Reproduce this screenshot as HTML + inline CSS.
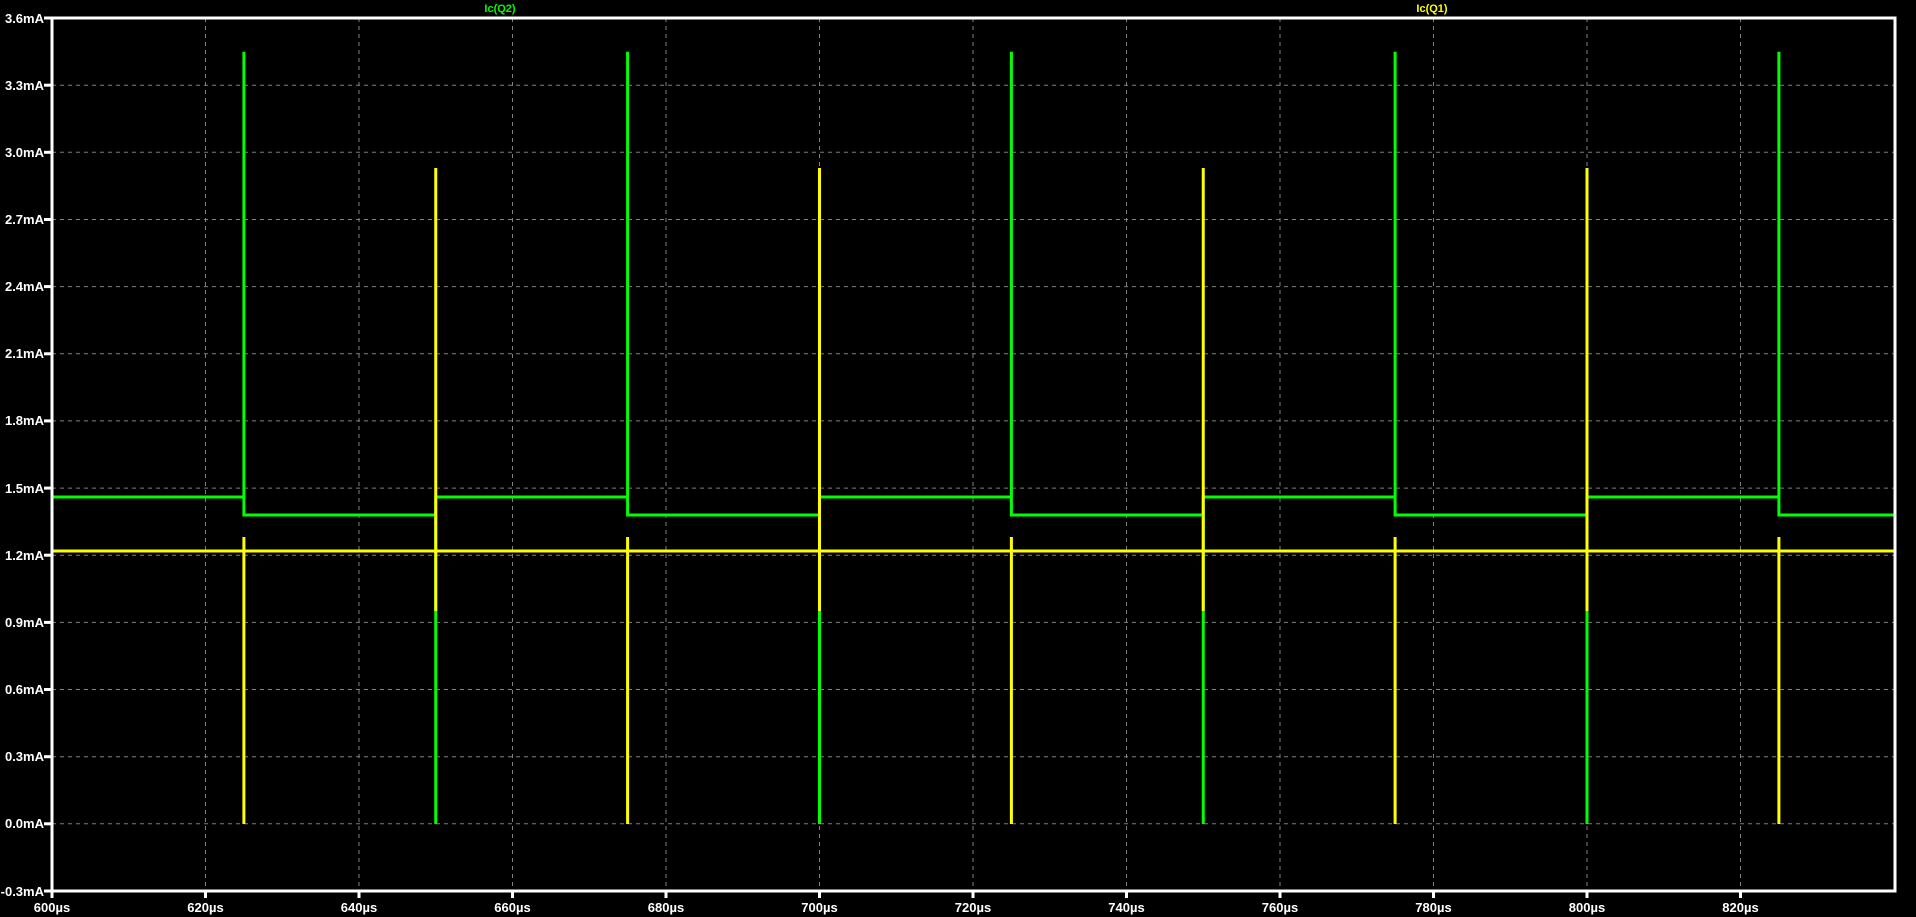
<!DOCTYPE html>
<html><head><meta charset="utf-8"><style>
html,body{margin:0;padding:0;background:#000;width:1916px;height:917px;overflow:hidden}
svg{display:block}
text{font-family:"Liberation Sans",sans-serif;font-weight:bold}
</style></head><body>
<svg width="1916" height="917" viewBox="0 0 1916 917">
<rect width="1916" height="917" fill="#000"/>
<g stroke="#808080" stroke-width="1" stroke-dasharray="4,4">
<line x1="52" x2="1895" y1="85.2" y2="85.2"/><line x1="52" x2="1895" y1="152.3" y2="152.3"/>
<line x1="52" x2="1895" y1="219.5" y2="219.5"/><line x1="52" x2="1895" y1="286.6" y2="286.6"/>
<line x1="52" x2="1895" y1="353.8" y2="353.8"/><line x1="52" x2="1895" y1="420.9" y2="420.9"/>
<line x1="52" x2="1895" y1="488.1" y2="488.1"/><line x1="52" x2="1895" y1="555.2" y2="555.2"/>
<line x1="52" x2="1895" y1="622.4" y2="622.4"/><line x1="52" x2="1895" y1="689.5" y2="689.5"/>
<line x1="52" x2="1895" y1="756.7" y2="756.7"/><line x1="52" x2="1895" y1="823.8" y2="823.8"/>
<line y1="18" y2="891" x1="205.5" x2="205.5"/><line y1="18" y2="891" x1="359" x2="359"/>
<line y1="18" y2="891" x1="512.5" x2="512.5"/><line y1="18" y2="891" x1="666" x2="666"/>
<line y1="18" y2="891" x1="819.5" x2="819.5"/><line y1="18" y2="891" x1="973" x2="973"/>
<line y1="18" y2="891" x1="1126.5" x2="1126.5"/><line y1="18" y2="891" x1="1280" x2="1280"/>
<line y1="18" y2="891" x1="1433.5" x2="1433.5"/><line y1="18" y2="891" x1="1587" x2="1587"/>
<line y1="18" y2="891" x1="1740.5" x2="1740.5"/>
</g>
<path fill="none" stroke="#00ff00" stroke-width="3" d="M52,824 V497 H243.9 V51.8 V515 H435.75 V824 V497 H627.6 V51.8 V515 H819.5 V824 V497 H1011.4 V51.8 V515 H1203.25 V824 V497 H1395.1 V51.8 V515 H1587 V824 V497 H1778.9 V51.8 V515 H1895"/>
<path fill="none" stroke="#ffff00" stroke-width="3" d="M52,168 V611 V551 H243.9 V824 V537 V551 H435.75 V168 V611 V551 H627.6 V824 V537 V551 H819.5 V168 V611 V551 H1011.4 V824 V537 V551 H1203.25 V168 V611 V551 H1395.1 V824 V537 V551 H1587 V168 V611 V551 H1778.9 V824 V537 V551 H1895"/>
<rect x="52" y="18" width="1843" height="873" fill="none" stroke="#fff" stroke-width="3"/>
<g stroke="#fff" stroke-width="3">
<line x1="44" x2="52" y1="18" y2="18"/><line x1="44" x2="52" y1="85.2" y2="85.2"/><line x1="44" x2="52" y1="152.3" y2="152.3"/><line x1="44" x2="52" y1="219.5" y2="219.5"/><line x1="44" x2="52" y1="286.6" y2="286.6"/><line x1="44" x2="52" y1="353.8" y2="353.8"/><line x1="44" x2="52" y1="420.9" y2="420.9"/><line x1="44" x2="52" y1="488.1" y2="488.1"/><line x1="44" x2="52" y1="555.2" y2="555.2"/><line x1="44" x2="52" y1="622.4" y2="622.4"/><line x1="44" x2="52" y1="689.5" y2="689.5"/><line x1="44" x2="52" y1="756.7" y2="756.7"/><line x1="44" x2="52" y1="823.8" y2="823.8"/><line x1="44" x2="52" y1="891" y2="891"/>
<line y1="891" y2="898" x1="52" x2="52"/><line y1="891" y2="898" x1="205.5" x2="205.5"/><line y1="891" y2="898" x1="359" x2="359"/><line y1="891" y2="898" x1="512.5" x2="512.5"/><line y1="891" y2="898" x1="666" x2="666"/><line y1="891" y2="898" x1="819.5" x2="819.5"/><line y1="891" y2="898" x1="973" x2="973"/><line y1="891" y2="898" x1="1126.5" x2="1126.5"/><line y1="891" y2="898" x1="1280" x2="1280"/><line y1="891" y2="898" x1="1433.5" x2="1433.5"/><line y1="891" y2="898" x1="1587" x2="1587"/><line y1="891" y2="898" x1="1740.5" x2="1740.5"/>
</g>
<g fill="#fff" font-size="13" text-anchor="end">
<text x="44" y="23">3.6mA</text><text x="44" y="90">3.3mA</text><text x="44" y="157">3.0mA</text><text x="44" y="224">2.7mA</text><text x="44" y="291">2.4mA</text><text x="44" y="358">2.1mA</text><text x="44" y="425">1.8mA</text><text x="44" y="493">1.5mA</text><text x="44" y="560">1.2mA</text><text x="44" y="627">0.9mA</text><text x="44" y="694">0.6mA</text><text x="44" y="761">0.3mA</text><text x="44" y="828">0.0mA</text><text x="44" y="896">-0.3mA</text>
</g>
<g fill="#fff" font-size="13" text-anchor="middle">
<text x="52" y="912">600µs</text><text x="205.5" y="912">620µs</text><text x="359" y="912">640µs</text><text x="512.5" y="912">660µs</text><text x="666" y="912">680µs</text><text x="819.5" y="912">700µs</text><text x="973" y="912">720µs</text><text x="1126.5" y="912">740µs</text><text x="1280" y="912">760µs</text><text x="1433.5" y="912">780µs</text><text x="1587" y="912">800µs</text><text x="1740.5" y="912">820µs</text>
</g>
<text x="500" y="12" fill="#00ff00" font-size="11" text-anchor="middle">Ic(Q2)</text>
<text x="1432" y="12" fill="#ffff00" font-size="11" text-anchor="middle">Ic(Q1)</text>
</svg>
</body></html>
